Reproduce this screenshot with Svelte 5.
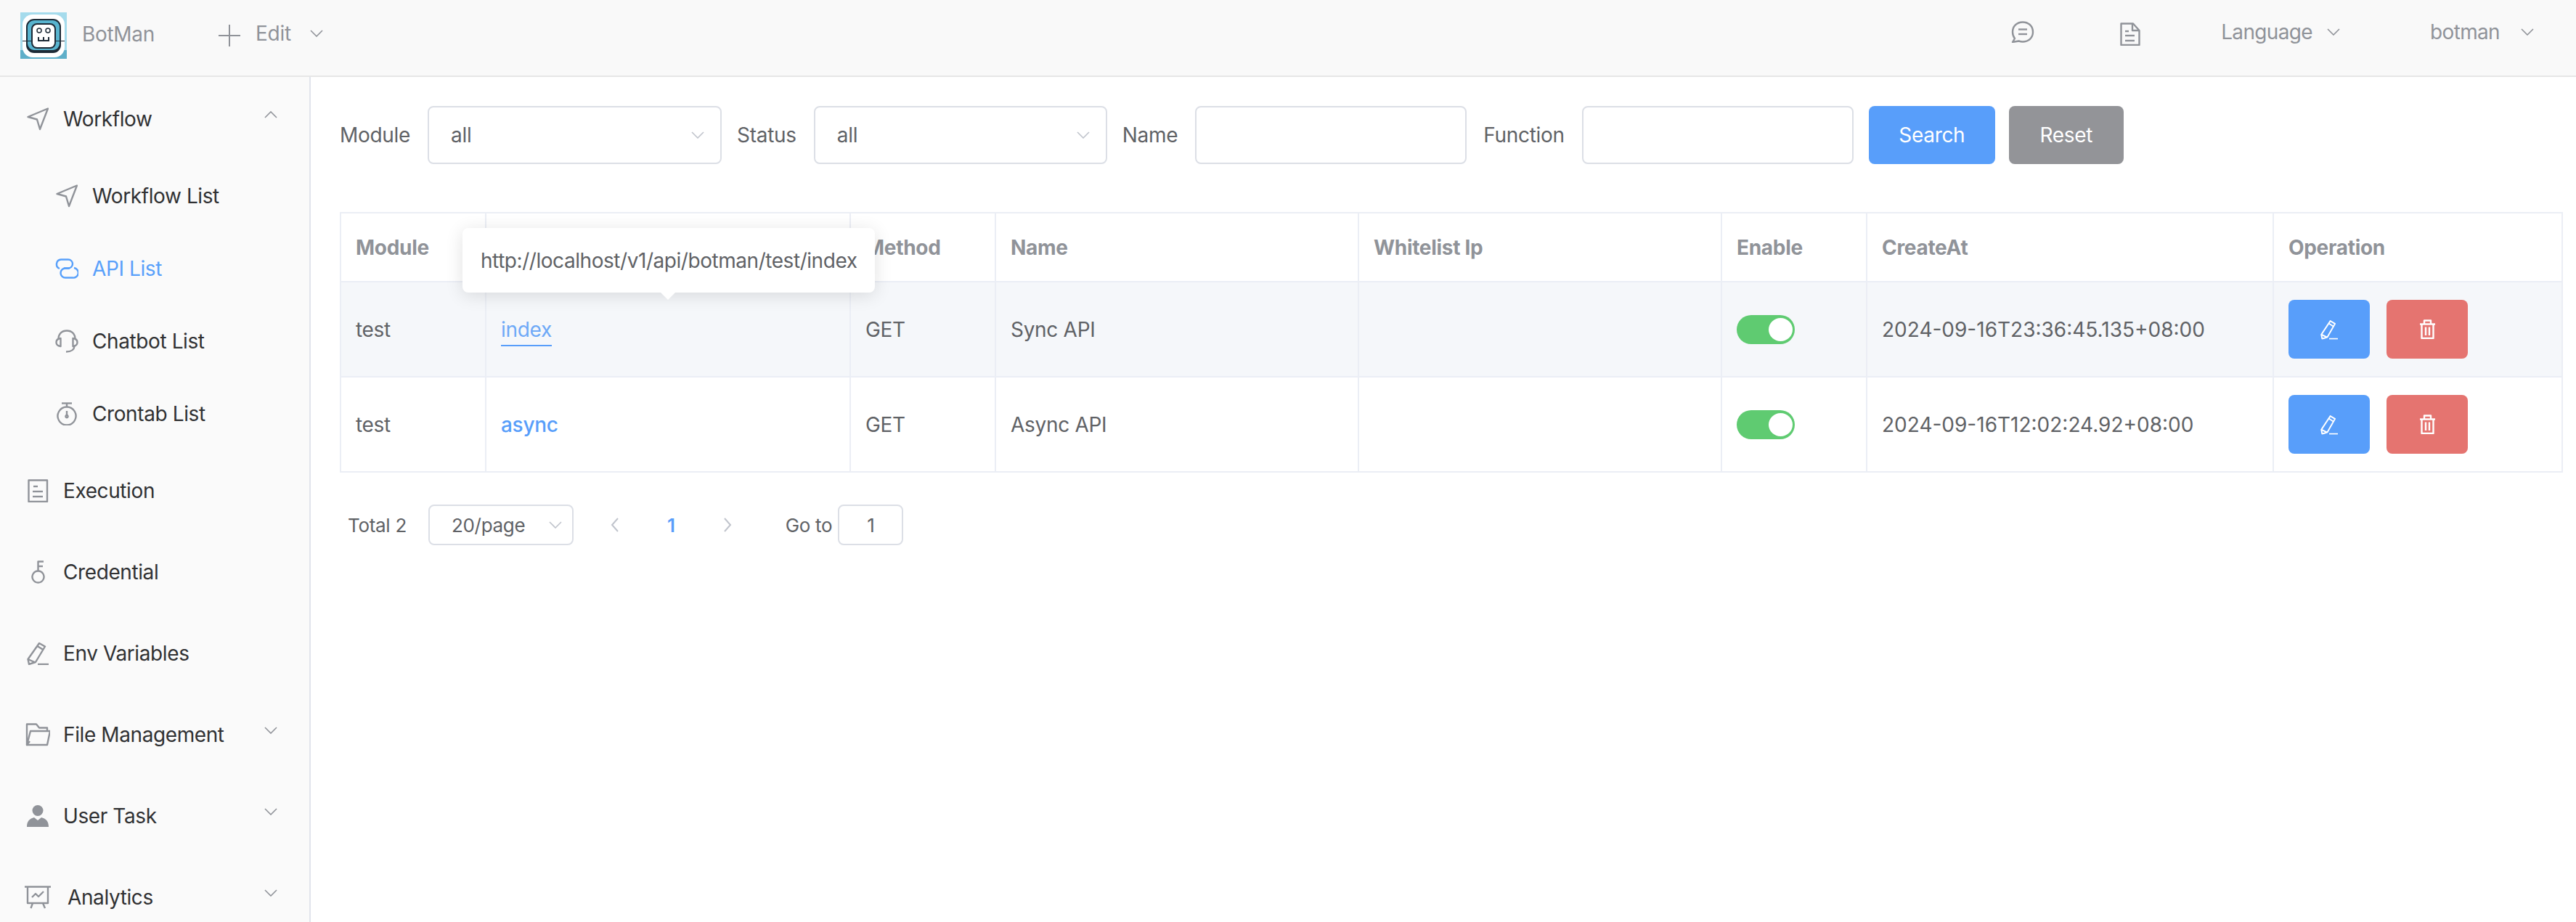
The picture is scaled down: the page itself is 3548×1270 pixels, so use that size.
<script lang="ts">
	const icons: Record<string, string[]> = {
		position: ['M29 1.5 L1.5 13 L14 16.5 L18 30 Z'],
		link: [
			'M6 14 A6.5 6.5 0 0 1 8 1.5 H18 A6 6 0 0 1 18 13.5 H12',
			'M26 13 A6.5 6.5 0 0 1 24 26.5 H14 A6.5 6.5 0 0 1 14 13.5 H20'
		],
		headset: [
			'M4.5 13 C4.5 6 9 1.5 16 1.5 C23 1.5 27.5 6 27.5 13',
			'M7.5 12 C3.5 12.5 1.5 15 1.5 17.5 C1.5 20 3.5 22.5 7.5 23 Z',
			'M24.5 12 C28.5 12.5 30.5 15 30.5 17.5 C30.5 20 28.5 22.5 24.5 23 Z',
			'M26.5 23 C26 28 22 30.5 15 30.5'
		],
		timer: [
			'M16 6.5 A12.5 12.5 0 1 0 16.01 6.5 Z',
			'M9 1.5 H23',
			'M16 1.5 V6.5',
			'M16 12 V18',
			'M16 18 A1.6 1.6 0 1 0 16.01 18 Z'
		],
		doc: ['M1.5 1.5 H27 V31 H1.5 Z', 'M8 10 H14', 'M7 17 H21', 'M7 24 H21'],
		key: [
			'M9.5 14.5 A8 8 0 1 0 9.51 14.5 Z',
			'M9.5 14.5 V1.5 H17',
			'M9.5 8 H16'
		],
		pencil: [
			'M17 2 L25 6.5 L12 28 L3 31 L1.5 24 Z',
			'M14.5 6 L22.5 11',
			'M1.5 24 L11.5 28.5',
			'M15 31 H30'
		],
		folder: [
			'M6 25 L2 30 V1.5 H15 L19 6.5 H30 V11',
			'M7 11 H34 L30 30 H2 Z'
		],
		board: [
			'M0 1.5 H36',
			'M4 1.5 V24 H32 V1.5',
			'M11 24 L8.5 31',
			'M25 24 L28 31',
			'M10 16 L15 11 L19 15 L26 8'
		],
		chat: [
			'M16 1.5 C7.5 1.5 2 7.5 2 15 C2 18.5 3 21.5 5 24 L2 29 L10.5 27.5 C12.5 28.2 14 28.5 16 28.5 C24.5 28.5 30 22.5 30 15 C30 7.5 24.5 1.5 16 1.5 Z',
			'M10 11.5 H22',
			'M10 18 H22'
		],
		paper: [
			'M1.5 1.5 H18 L26.5 11 V31 H1.5 Z',
			'M17 1.5 V11 H26.5',
			'M7 12 H12',
			'M7 18 H20',
			'M7 25 H20'
		],
		trash: [
			'M1 6.5 H22',
			'M7 6.5 V1.5 H16 V6.5',
			'M3.5 6.5 V26 H19.5 V6.5',
			'M9 10.5 V22',
			'M14 10.5 V22'
		]
	};

	const nav = [
		{ label: 'Workflow', icon: 'position', w: 30, h: 32, open: true, children: [
			{ label: 'Workflow List', icon: 'position', w: 30, h: 32 },
			{ label: 'API List', icon: 'link', w: 32, h: 28, active: true },
			{ label: 'Chatbot List', icon: 'headset', w: 32, h: 32 },
			{ label: 'Crontab List', icon: 'timer', w: 32, h: 32 }
		] },
		{ label: 'Execution', icon: 'doc', w: 29, h: 32 },
		{ label: 'Credential', icon: 'key', w: 19, h: 32 },
		{ label: 'Env Variables', icon: 'pencil', w: 30, h: 32 },
		{ label: 'File Management', icon: 'folder', w: 34, h: 32, arrow: true },
		{ label: 'User Task', icon: 'user', w: 30, h: 30, arrow: true },
		{ label: 'Analytics', icon: 'board', w: 36, h: 32, arrow: true, wide: true }
	];

	const rows = [
		{ module: 'test', fn: 'index', method: 'GET', name: 'Sync API', createdAt: '2024-09-16T23:36:45.135+08:00', hover: true },
		{ module: 'test', fn: 'async', method: 'GET', name: 'Async API', createdAt: '2024-09-16T12:02:24.92+08:00', hover: false }
	];
	const columns = [200, 502, 200, 500, 500, 200, 560, 398];
	// second heading sits behind the tooltip in this state
	const heads = ['Module', '', 'Method', 'Name', 'Whitelist Ip', 'Enable', 'CreateAt', 'Operation'];
</script>

{#snippet icon(name: string, w: number, h: number)}
	<svg class="icon" width={w} height={h} viewBox="0 0 {w} {h}" fill="none">
		{#if name === 'user'}
			<circle cx="15" cy="7.5" r="7.5" fill="currentColor" />
			<path d="M0 30 C0 22 4 18.5 10 17 L15 21 L20 17 C26 18.5 30 22 30 30 Z" fill="currentColor" />
		{:else}
			{#each icons[name] as d}
				<path {d} stroke="currentColor" stroke-width="2.4" stroke-linejoin="round" />
			{/each}
		{/if}
	</svg>
{/snippet}

{#snippet chevron(up: boolean = false)}
	<svg class="chevron" class:up width="18" height="10" viewBox="0 0 18 10" fill="none">
		<path d="M1 1 L9 9 L17 1" stroke="currentColor" stroke-width="1.6" />
	</svg>
{/snippet}

<div class="page">
	<header class="topbar">
		<svg class="logo" width="64" height="64" viewBox="0 0 64 64">
			<rect width="64" height="64" fill="#a5dbec" />
			<rect y="52" width="64" height="12" fill="#5fafc9" />
			<rect x="3" y="3" width="58" height="59" rx="14" fill="#fff" />
			<rect x="8" y="9" width="48" height="47" rx="11" fill="#1d2a36" />
			<rect x="10" y="11" width="44" height="41" rx="9" fill="#58b4cf" />
			<rect x="15" y="15" width="34" height="35" rx="8" fill="#1d2a36" />
			<rect x="17" y="17" width="30" height="31" rx="6" fill="#fff" />
			<rect x="3" y="39" width="14" height="1" fill="#1d2a36" />
			<rect x="47" y="39" width="14" height="1" fill="#1d2a36" />
			<circle cx="26" cy="25" r="3" fill="none" stroke="#1d2a36" stroke-width="1.5" />
			<circle cx="38" cy="25" r="3" fill="none" stroke="#1d2a36" stroke-width="1.5" />
			<path d="M25 34 V39 H39 V34 M32 34 V39" fill="none" stroke="#1d2a36" stroke-width="2" />
		</svg>
		<span class="brand">BotMan</span>
		<span class="edit">
			<svg width="30" height="30" viewBox="0 0 30 30" fill="none">
				<path d="M15 0 V30 M0 15 H30" stroke="currentColor" stroke-width="2" />
			</svg>
			<span>Edit</span>
			{@render chevron()}
		</span>
		<span class="top-right">
			<span class="top-icon chat">{@render icon('chat', 32, 30)}</span>
			<span class="top-icon paper">{@render icon('paper', 28, 32)}</span>
			<span class="menu lang">Language {@render chevron()}</span>
			<span class="menu user">botman {@render chevron()}</span>
		</span>
	</header>

	<div class="body">
		<aside class="sidebar">
			{#each nav as item}
				<div class="nav-item" class:wide={item.wide}>
					<span class="nav-icon">{@render icon(item.icon, item.w, item.h)}</span>
					<span>{item.label}</span>
					{#if item.open || item.arrow}
						<span class="nav-arrow">{@render chevron(item.open)}</span>
					{/if}
				</div>
				{#if item.children}
					{#each item.children as child}
						<div class="nav-child" class:active={child.active}>
							<span class="nav-icon">{@render icon(child.icon, child.w, child.h)}</span>
							<span>{child.label}</span>
						</div>
					{/each}
				{/if}
			{/each}
		</aside>

		<main class="content">
			<form class="filters">
				<span class="field-label">Module</span>
				<span class="box select module">all {@render chevron()}</span>
				<span class="field-label">Status</span>
				<span class="box select status">all {@render chevron()}</span>
				<span class="field-label">Name</span>
				<span class="box input"></span>
				<span class="field-label">Function</span>
				<span class="box input"></span>
				<span class="btn primary">Search</span>
				<span class="btn neutral">Reset</span>
			</form>

			<div class="table-wrap">
				<table>
					<colgroup>
						{#each columns as c}
							<col style="width: {c}px" />
						{/each}
					</colgroup>
					<thead>
						<tr>
							{#each heads as h}
								<th>{h}</th>
							{/each}
						</tr>
					</thead>
					<tbody>
						{#each rows as row}
							<tr class:hover={row.hover}>
								<td>{row.module}</td>
								<td><span class="fn" class:underline={row.hover}>{row.fn}</span></td>
								<td>{row.method}</td>
								<td>{row.name}</td>
								<td></td>
								<td><span class="switch"><span class="knob"></span></span></td>
								<td class="date">{row.createdAt}</td>
								<td>
									<div class="ops">
										<span class="op edit-op">{@render icon('pencil', 30, 32)}</span>
										<span class="op del-op">{@render icon('trash', 23, 27)}</span>
									</div>
								</td>
							</tr>
						{/each}
					</tbody>
				</table>
				<div class="tooltip">http://localhost/v1/api/botman/test/index</div>
			</div>

			<div class="pager">
				<span class="total">Total 2</span>
				<span class="box page-size">20/page {@render chevron()}</span>
				<svg class="pg-arrow prev" width="11" height="20" viewBox="0 0 11 20" fill="none"><path d="M10 1 L2 10 L10 19" stroke="currentColor" stroke-width="2" /></svg>
				<span class="current">1</span>
				<svg class="pg-arrow next" width="11" height="20" viewBox="0 0 11 20" fill="none"><path d="M1 1 L9 10 L1 19" stroke="currentColor" stroke-width="2" /></svg>
				<span class="goto">Go to</span>
				<span class="box jump">1</span>
			</div>
		</main>
	</div>
</div>

<style>
	:global(body) {
		margin: 0;
		background: #fff;
	}

	.page {
		width: 3548px;
		height: 1270px;
		overflow: hidden;
		display: flex;
		flex-direction: column;
		font-family: Inter, 'Liberation Sans', sans-serif;
		font-size: 28px;
		letter-spacing: -0.3px;
		color: #606266;
	}

	.topbar {
		height: 98px;
		padding-bottom: 6px;
		flex-shrink: 0;
		display: flex;
		align-items: center;
		padding-left: 28px;
		background: #f9f9f9;
		border-bottom: 2px solid #e6e6e6;
		color: #909399;
	}

	.logo {
		display: block;
	}

	.brand {
		margin-left: 21px;
		margin-top: -4px;
	}

	.edit {
		margin-left: 88px;
		margin-top: -6px;
		display: flex;
		align-items: center;
	}

	.edit span {
		margin-left: 21px;
		margin-right: 26px;
	}

	.edit svg:first-child {
		margin-top: 6px;
	}

	.top-right {
		margin-left: auto;
		display: flex;
		align-items: center;
		margin-top: -10px;
	}

	.top-icon {
		display: flex;
	}

	.chat {
		margin-right: 118px;
	}

	.paper {
		margin-right: 111px;
		margin-top: 6px;
	}

	.menu {
		display: flex;
		align-items: center;
		letter-spacing: -0.65px;
	}

	.lang {
		gap: 20px;
		margin-right: 124px;
	}

	.user {
		gap: 29px;
		margin-right: 58px;
	}

	.chevron {
		display: block;
		flex-shrink: 0;
	}

	.chevron.up {
		transform: rotate(180deg);
	}

	.body {
		flex: 1;
		display: flex;
		min-height: 0;
	}

	.sidebar {
		width: 426px;
		flex-shrink: 0;
		padding-top: 2px;
		box-sizing: content-box;
		background: #fafafa;
		border-right: 2px solid #e1e4ec;
		color: #303133;
		overflow: hidden;
		letter-spacing: -0.4px;
	}

	.nav-item,
	.nav-child {
		display: flex;
		align-items: center;
	}

	.nav-item {
		height: 112px;
		padding-left: 37px;
	}

	.nav-child {
		height: 100px;
		padding-left: 76px;
	}

	.nav-child.active {
		color: #58a0fa;
	}

	.nav-icon {
		width: 30px;
		margin-right: 20px;
		display: flex;
		justify-content: center;
		color: #909399;
	}

	.nav-child .nav-icon {
		width: 32px;
		margin-right: 19px;
	}

	.nav-child.active .nav-icon {
		color: #58a0fa;
	}

	.nav-item.wide .nav-icon {
		margin-right: 26px;
	}

	.icon {
		display: block;
		flex-shrink: 0;
	}

	.nav-arrow {
		margin-left: auto;
		margin-right: 44px;
		margin-top: -12px;
		color: #909399;
	}

	.content {
		flex: 1;
		min-width: 0;
		padding: 40px 18px 0 40px;
	}

	.filters {
		display: flex;
		align-items: center;
		height: 80px;
	}

	.field-label {
		margin-right: 24px;
		margin-left: 21px;
	}

	.field-label:first-child {
		margin-left: 0;
	}

	.input + .field-label {
		margin-left: 23px;
	}

	.box {
		box-sizing: border-box;
		display: flex;
		align-items: center;
		border: 2px solid #dcdfe6;
		border-radius: 8px;
		background: #fff;
	}

	.select,
	.input {
		height: 80px;
	}

	.select {
		padding: 0 22px 0 30px;
		justify-content: space-between;
		color: #606266;
	}

	.select .chevron,
	.page-size .chevron {
		color: #c0c4cc;
	}

	.module {
		width: 405px;
	}

	.status {
		width: 404px;
	}

	.input {
		width: 374px;
	}

	.btn {
		height: 80px;
		display: flex;
		align-items: center;
		justify-content: center;
		border-radius: 8px;
		color: #fff;
	}

	.primary {
		width: 174px;
		margin-left: 21px;
		background: #589efa;
	}

	.neutral {
		width: 158px;
		margin-left: 19px;
		background: #939498;
	}

	.table-wrap {
		position: relative;
		margin-top: 66px;
	}

	table {
		table-layout: fixed;
		width: 3062px;
		border-collapse: separate;
		border-spacing: 0;
		border-top: 2px solid #ebeef5;
		border-left: 2px solid #ebeef5;
	}

	th,
	td {
		padding: 0 20px;
		box-sizing: border-box;
		text-align: left;
		border-right: 2px solid #ebeef5;
		border-bottom: 2px solid #ebeef5;
	}

	th {
		height: 95px;
		font-weight: 700;
		color: #909399;
	}

	td {
		height: 131px;
	}

	td.date {
		letter-spacing: 0;
	}

	tr.hover td {
		background: #f5f7fa;
	}

	.fn {
		color: #589efa;
		font-weight: 500;
	}

	.fn.underline {
		font-weight: 400;
		color: #6ea9f7;
		padding-bottom: 4px;
		border-bottom: 2px solid #589efa;
	}

	.switch {
		display: block;
		width: 80px;
		height: 40px;
		border-radius: 20px;
		background: #5fcb71;
		position: relative;
	}

	.knob {
		position: absolute;
		top: 4px;
		right: 3px;
		width: 33px;
		height: 32px;
		border-radius: 50%;
		background: #fff;
	}

	.ops {
		display: flex;
		gap: 23px;
	}

	.op {
		width: 112px;
		height: 81px;
		border-radius: 8px;
		display: flex;
		align-items: center;
		justify-content: center;
		color: #fff;
	}

	.edit-op .icon {
		transform: scale(0.8, 0.85);
	}

	.edit-op {
		background: #589efa;
	}

	.del-op {
		background: #e57470;
	}

	.tooltip {
		position: absolute;
		left: 169px;
		top: 22px;
		height: 89px;
		box-sizing: border-box;
		padding: 0 25px;
		display: flex;
		align-items: center;
		white-space: nowrap;
		background: #fff;
		border-radius: 8px;
		box-shadow: 0 4px 24px rgba(0, 0, 0, 0.12);
		color: #606266;
		letter-spacing: -0.45px;
	}

	.tooltip::after {
		content: '';
		position: absolute;
		left: 273px;
		bottom: -10px;
		border-left: 10px solid transparent;
		border-right: 10px solid transparent;
		border-top: 10px solid #fff;
	}

	.pager {
		display: flex;
		align-items: center;
		height: 56px;
		margin-top: 44px;
		padding-left: 11px;
		font-size: 26px;
	}

	.page-size {
		width: 200px;
		height: 56px;
		margin-left: 30px;
		padding: 0 14px 0 30px;
		justify-content: space-between;
	}

	.pg-arrow {
		color: #c0c4cc;
		flex-shrink: 0;
	}

	.prev {
		margin-left: 51px;
	}

	.current {
		margin-left: 67px;
		color: #589efa;
		font-weight: 600;
	}

	.next {
		margin-left: 67px;
	}

	.goto {
		margin-left: 74px;
	}

	.jump {
		width: 90px;
		height: 56px;
		margin-left: 8px;
		justify-content: center;
	}
</style>
